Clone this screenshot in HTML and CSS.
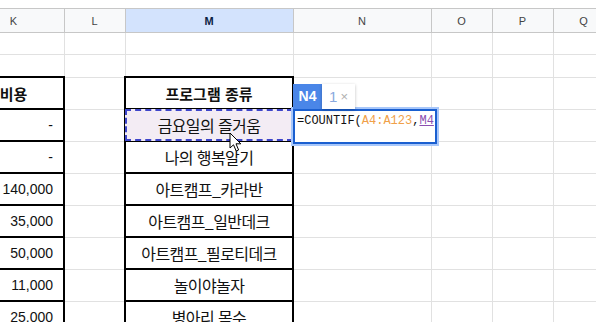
FILE: index.html
```html
<!DOCTYPE html>
<html lang="ko">
<head>
  <meta charset="UTF-8" />
  <title>Sheet</title>
  <link rel="stylesheet" href="styles.css">
</head>
<body>
  <div class="sheet">
    <table class="grid">
      <colgroup>
        <col class="w-k"><col class="w-l"><col class="w-m"><col class="w-n"><col class="w-o"><col class="w-p"><col class="w-q">
      </colgroup>
      <thead>
        <tr class="hdr">
          <th>K</th><th>L</th><th class="sel">M</th><th>N</th><th>O</th><th>P</th><th>Q</th>
        </tr>
      </thead>
      <tbody>
        <tr class="empty"><td></td><td></td><td></td><td></td><td></td><td></td><td></td></tr>
        <tr class="empty"><td></td><td></td><td></td><td></td><td></td><td></td><td></td></tr>
        <tr class="row">
          <td class="box title">비용</td><td></td><td class="box title">프로그램 종류</td>
          <td></td><td></td><td></td><td></td>
        </tr>
        <tr class="row">
          <td class="box num">-</td><td></td>
          <td class="box txt copied"><div class="ants"></div><span>금요일의 즐거움</span></td>
          <td class="editing">
            <div class="chip"><span class="chip-ref">N4</span><span class="chip-count">1 <i>×</i></span></div>
            <div class="editor">=COUNTIF(<span class="rng">A4:A123</span>,<span class="ref">M4</span></div>
          </td>
          <td></td><td></td><td></td>
        </tr>
        <tr class="row">
          <td class="box num">-</td><td></td><td class="box txt">나의 행복알기</td>
          <td></td><td></td><td></td><td></td>
        </tr>
        <tr class="row">
          <td class="box num">140,000</td><td></td><td class="box txt">아트캠프_카라반</td>
          <td></td><td></td><td></td><td></td>
        </tr>
        <tr class="row">
          <td class="box num">35,000</td><td></td><td class="box txt">아트캠프_일반데크</td>
          <td></td><td></td><td></td><td></td>
        </tr>
        <tr class="row">
          <td class="box num">50,000</td><td></td><td class="box txt">아트캠프_필로티데크</td>
          <td></td><td></td><td></td><td></td>
        </tr>
        <tr class="row">
          <td class="box num">11,000</td><td></td><td class="box txt">놀이야놀자</td>
          <td></td><td></td><td></td><td></td>
        </tr>
        <tr class="row">
          <td class="box num">25,000</td><td></td><td class="box txt">병아리 목수</td>
          <td></td><td></td><td></td><td></td>
        </tr>
      </tbody>
    </table>
    <svg class="cursor" width="14" height="21" viewBox="0 0 14 21">
      <path d="M1 1 L1 16 L4.5 12.8 L7.2 19 L9.6 18 L7 11.8 L11.8 11.8 Z" fill="#fff" stroke="#000" stroke-width="1" stroke-linejoin="round"/>
    </svg>
  </div>
</body>
</html>
```

FILE: styles.css
```css
body {
  margin: 0;
  background: #fff;
  font-family: "Liberation Sans", Arial, sans-serif;
  overflow: hidden;
}
.sheet {
  position: relative;
  padding-top: 8px;
  height: 314px;
  overflow: hidden;
}
.grid {
  border-collapse: collapse;
  table-layout: fixed;
  width: 651px;
  margin-left: -38px;
}
.w-k { width: 101px; }
.w-l { width: 61px; }
.w-m { width: 168px; }
.w-n { width: 138px; }
.w-o { width: 61px; }
.w-p { width: 61px; }
.w-q { width: 61px; }

.grid th,
.grid td {
  border: 1px solid #e1e1e1;
  padding: 0;
}
.hdr th {
  height: 23px;
  background: #f8f9fa;
  border-color: #c7c7c7;
  font-size: 11px;
  font-weight: normal;
  color: #444;
  text-align: center;
}
.hdr th.sel {
  background: #d3e3fd;
  color: #0b1f44;
  font-weight: bold;
}
.empty td {
  height: 21px;
}
.row td {
  height: 30px;
  font-family: "Liberation Sans", "Noto Sans CJK KR", sans-serif;
  font-size: 14px;
  color: #111;
}
.grid td.box {
  border: 2px solid #000;
}
.row td.title {
  font-family: "Noto Sans CJK KR", sans-serif;
  font-weight: bold;
  font-size: 15px;
  text-align: center;
}
.num {
  text-align: right;
  padding-right: 10px !important;
}
.row td.txt {
  font-family: "Noto Sans CJK KR", sans-serif;
  font-size: 16px;
  letter-spacing: -0.6px;
  text-align: center;
}

.copied {
  position: relative;
}
.copied span {
  position: relative;
}
.ants {
  position: absolute;
  left: -1px;
  top: -1px;
  right: -1px;
  bottom: -1px;
  background: #f3ecf4;
  border: 2px dashed #3d45c9;
}

.editing {
  position: relative;
}
.editor {
  position: absolute;
  left: -1px;
  top: -1px;
  width: 138px;
  height: 28px;
  border: 2px solid #1a5fd0;
  box-shadow: 0 0 0 2px #a8c7fa;
  background: #fff;
  font-family: "Liberation Mono", monospace;
  font-size: 12px;
  color: #111;
  padding: 3px 0 0 2px;
  box-sizing: content-box;
  z-index: 2;
}
.rng {
  color: #f0a048;
}
.ref {
  color: #8b4fb0;
  text-decoration: underline;
}
.chip {
  position: absolute;
  left: -1px;
  bottom: calc(100% + 1px);
  height: 25px;
  display: flex;
  z-index: 3;
}
.chip-ref {
  width: 29px;
  background: #4a86e8;
  color: #fff;
  font-weight: bold;
  font-size: 14px;
  display: flex;
  align-items: center;
  justify-content: center;
}
.chip-count {
  width: 33px;
  background: #fff;
  box-shadow: 0 1px 3px rgba(0, 0, 0, 0.25);
  color: #8aa9de;
  font-size: 15px;
  display: flex;
  align-items: center;
  justify-content: center;
  gap: 3px;
}
.chip-count i {
  font-style: normal;
  color: #b0b0b0;
  font-size: 13px;
}
.cursor {
  position: absolute;
  left: 229px;
  top: 132px;
  z-index: 5;
}
```
